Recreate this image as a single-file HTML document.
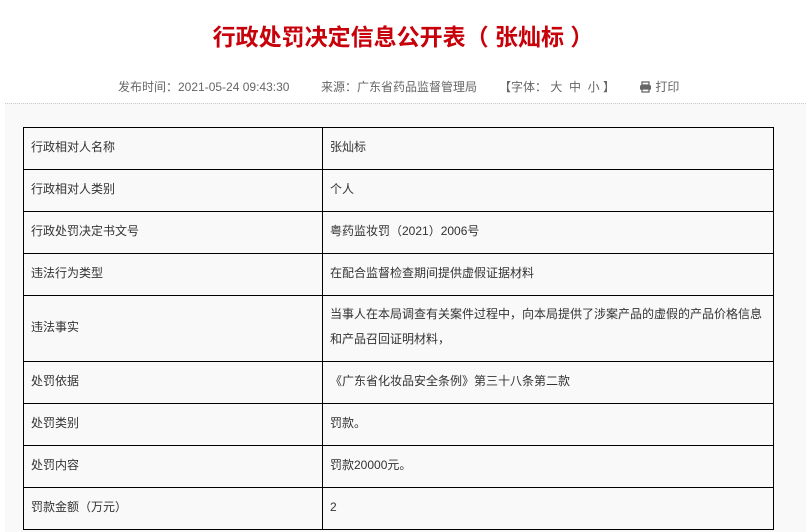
<!DOCTYPE html>
<html><head><meta charset="utf-8"><style>
body{margin:0;width:806px;height:532px;overflow:hidden;background:#fff;font-family:"Liberation Sans","Noto Sans CJK SC",sans-serif;}
h1{position:absolute;left:0;width:806px;top:20px;margin:0;text-align:center;font-size:23px;color:#c8000a;font-weight:bold;line-height:34px;}
.meta{position:absolute;top:78px;left:0;width:806px;font-size:12px;color:#666;line-height:18px;}
.meta span{position:absolute;white-space:nowrap}
.bg{position:absolute;left:5px;top:103px;right:0;bottom:0;background:#f9f9f9;border-top:1px dotted #c8c8c8;}
table{position:absolute;left:23px;top:127px;border-collapse:collapse;width:751px;font-size:12px;color:#333;}
td{border:1px solid #000;padding:0 0 3px 7px;height:38px;vertical-align:middle;line-height:25px;}
td:first-child{width:291px}
</style></head><body>
<h1>行政处罚决定信息公开表（ 张灿标 ）</h1>
<div class="meta">
<span style="left:118px">发布时间：2021-05-24 09:43:30</span>
<span style="left:321px">来源：广东省药品监督管理局</span>
<span style="left:499px">【字体：&nbsp;大&nbsp;&nbsp;中&nbsp;&nbsp;小&nbsp;】</span>
<span style="left:639px"><svg width="13" height="12" viewBox="0 0 13 12" style="vertical-align:-2px"><rect x="3" y="1" width="7" height="3" fill="none" stroke="#666" stroke-width="1.3"/><rect x="1" y="4" width="11" height="5" rx="1.5" fill="#666"/><rect x="3" y="8" width="7" height="3" fill="#fff" stroke="#666" stroke-width="1.3"/></svg>&nbsp;打印</span>
</div>
<div class="bg"></div>
<table>
<tr><td>行政相对人名称</td><td>张灿标</td></tr>
<tr><td>行政相对人类别</td><td>个人</td></tr>
<tr><td>行政处罚决定书文号</td><td>粤药监妆罚（2021）2006号</td></tr>
<tr><td>违法行为类型</td><td>在配合监督检查期间提供虚假证据材料</td></tr>
<tr><td style="height:62px">违法事实</td><td>当事人在本局调查有关案件过程中，向本局提供了涉案产品的虚假的产品价格信息和产品召回证明材料，</td></tr>
<tr><td>处罚依据</td><td>《广东省化妆品安全条例》第三十八条第二款</td></tr>
<tr><td>处罚类别</td><td>罚款。</td></tr>
<tr><td>处罚内容</td><td>罚款20000元。</td></tr>
<tr><td>罚款金额（万元）</td><td>2</td></tr>
</table>
</body></html>
